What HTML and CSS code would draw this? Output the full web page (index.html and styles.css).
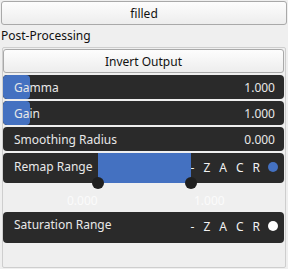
FILE: index.html
```html
<!DOCTYPE html>
<html>
<head>
<meta charset="utf-8">
<link rel="stylesheet" href="styles.css">
</head>
<body>
<div class="btn top-btn">filled</div>
<div class="section-label">Post-Processing</div>
<div class="panel">
  <div class="btn invert-btn">Invert Output</div>
  <div class="row slider">
    <div class="fill" style="width:27px"></div>
    <span class="label">Gamma</span><span class="value">1.000</span>
  </div>
  <div class="row slider">
    <div class="fill" style="width:27px"></div>
    <span class="label">Gain</span><span class="value">1.000</span>
  </div>
  <div class="row slider">
    <span class="label">Smoothing Radius</span><span class="value">0.000</span>
  </div>
  <div class="row range">
    <span class="label range-label">Remap Range</span>
    <div class="range-track">
      <span class="handle handle-l"></span>
      <span class="handle handle-r"></span>
    </div>
    <div class="flags"><span>-</span><span>Z</span><span>A</span><span>C</span><span>R</span><span class="dot dot-blue"></span></div>
  </div>
  <div class="range-values"><span class="rv rv-l">0.000</span><span class="rv rv-r">1.000</span></div>
  <div class="row range sat">
    <span class="label range-label">Saturation Range</span>
    <div class="flags"><span>-</span><span>Z</span><span>A</span><span>C</span><span>R</span><span class="dot dot-white"></span></div>
  </div>
</div>
</body>
</html>
```
FILE: styles.css
```css
html, body {
  margin: 0;
  padding: 0;
}
body {
  background: #efefef;
  font-family: "Noto Sans", "Open Sans", sans-serif;
  font-size: 12px;
  color: #1a1a1a;
  width: 288px;
  height: 269px;
  overflow: hidden;
}
.btn {
  box-sizing: border-box;
  border: 1px solid #a9a9a9;
  border-radius: 3px;
  background: linear-gradient(#fdfdfd, #ededed);
  display: flex;
  align-items: center;
  justify-content: center;
  color: #111;
}
.top-btn {
  margin: 1px 1px 0 1px;
  height: 24px;
}
.section-label {
  height: 22px;
  padding-left: 1px;
  line-height: 21px;
  color: #111;
}
.panel {
  box-sizing: border-box;
  margin-left: 2px;
  width: 284px;
  height: 221px;
  border: 1px solid #cecece;
  border-radius: 2px;
  padding: 1px 1px 0 0;
  display: flex;
  flex-direction: column;
  gap: 2px;
}
.invert-btn {
  height: 24px;
  margin-left: 0;
}
.row {
  position: relative;
  box-sizing: border-box;
  width: 281px;
  background: #2a2a2a;
  border-radius: 4px;
  color: #e8e8e8;
  display: flex;
  align-items: center;
  overflow: visible;
}
.slider {
  height: 24px;
  padding: 0 9px 0 11px;
  justify-content: space-between;
  overflow: hidden;
}
.fill {
  position: absolute;
  left: 0;
  top: 0;
  bottom: 0;
  background: #4471c1;
  border-radius: 4px;
}
.label, .value {
  position: relative;
}
.range {
  height: 30px;
}
.range-label {
  width: 95px;
  padding-left: 11px;
  box-sizing: border-box;
  align-self: flex-start;
  line-height: 27px;
}
.range-track {
  position: relative;
  width: 93px;
  height: 30px;
  background: #4471c1;
}
.handle {
  position: absolute;
  width: 12px;
  height: 12px;
  border-radius: 50%;
  background: #1f1f1f;
  bottom: -6px;
}
.handle-l { left: -6px; }
.handle-r { right: -6px; }
.flags {
  flex: 1;
  display: flex;
  align-items: center;
  justify-content: flex-end;
  gap: 9px;
  padding-right: 6px;
  color: #f2f2f2;
  align-self: flex-start;
  height: 28px;
}
.dot {
  width: 10px;
  height: 10px;
  border-radius: 50%;
  margin-left: -1px;
}
.dot-blue { background: #4471c1; }
.dot-white { background: #ffffff; }
.range-values {
  height: 25px;
  display: flex;
  align-items: flex-end;
  color: #fbfbfb;
  position: relative;
}
.rv-l {
  width: 64px;
  margin-left: 64px;
  text-align: left;
  line-height: 18px;
}
.rv-r {
  margin-left: 63px;
  line-height: 18px;
}
.sat {
  height: 31px;
}
.sat .range-label {
  line-height: 26px;
  width: auto;
  flex: none;
}
.sat .flags {
  height: 28px;
}
```
